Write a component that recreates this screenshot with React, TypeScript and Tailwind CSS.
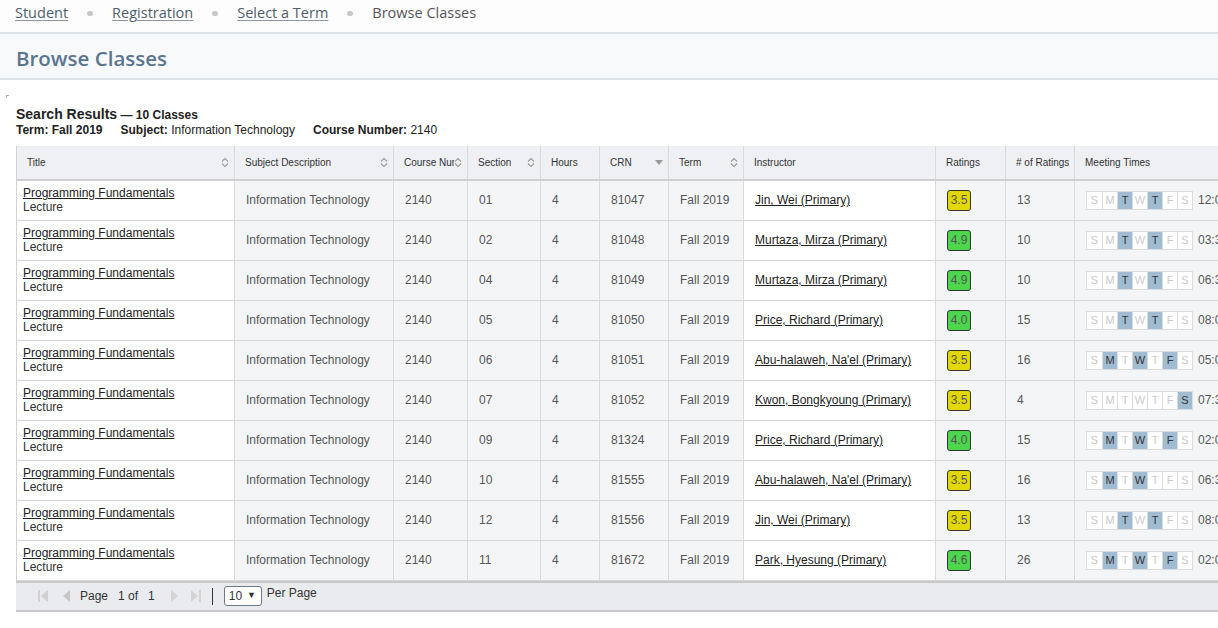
import React from "react";

type Row = {
  section: string;
  crn: string;
  instructor: string;
  rating: string;
  count: string;
  days: string;
  time: string;
};

const rows: Row[] = [
  { section: "01", crn: "81047", instructor: "Jin, Wei", rating: "3.5", count: "13", days: "TR", time: "12:00 PM - 01:15 PM" },
  { section: "02", crn: "81048", instructor: "Murtaza, Mirza", rating: "4.9", count: "10", days: "TR", time: "03:30 PM - 04:45 PM" },
  { section: "04", crn: "81049", instructor: "Murtaza, Mirza", rating: "4.9", count: "10", days: "TR", time: "06:30 PM - 07:45 PM" },
  { section: "05", crn: "81050", instructor: "Price, Richard", rating: "4.0", count: "15", days: "TR", time: "08:00 AM - 09:15 AM" },
  { section: "06", crn: "81051", instructor: "Abu-halaweh, Na'el", rating: "3.5", count: "16", days: "MWF", time: "05:00 PM - 05:50 PM" },
  { section: "07", crn: "81052", instructor: "Kwon, Bongkyoung", rating: "3.5", count: "4", days: "A", time: "07:30 AM - 10:15 AM" },
  { section: "09", crn: "81324", instructor: "Price, Richard", rating: "4.0", count: "15", days: "MWF", time: "02:00 PM - 02:50 PM" },
  { section: "10", crn: "81555", instructor: "Abu-halaweh, Na'el", rating: "3.5", count: "16", days: "MW", time: "06:30 PM - 07:45 PM" },
  { section: "12", crn: "81556", instructor: "Jin, Wei", rating: "3.5", count: "13", days: "TR", time: "08:00 AM - 09:15 AM" },
  { section: "11", crn: "81672", instructor: "Park, Hyesung", rating: "4.6", count: "26", days: "MWF", time: "02:00 PM - 02:50 PM" },
];

const dayKeys = [
  { label: "S", key: "U" },
  { label: "M", key: "M" },
  { label: "T", key: "T" },
  { label: "W", key: "W" },
  { label: "T", key: "R" },
  { label: "F", key: "F" },
  { label: "S", key: "A" },
];

const SortIcon = () => (
  <svg width="8" height="11" viewBox="0 0 8 11" className="shrink-0">
    <path d="M1 4.5 L4 1.5 L7 4.5" fill="none" stroke="#9a9a9a" strokeWidth="1.1" />
    <path d="M1 6.5 L4 9.5 L7 6.5" fill="none" stroke="#9a9a9a" strokeWidth="1.1" />
  </svg>
);

const SortDown = () => (
  <svg width="8" height="5" viewBox="0 0 8 5" className="shrink-0">
    <path d="M0 0 L8 0 L4 5 Z" fill="#9a9a9a" />
  </svg>
);

const columns: { label: string; sort?: "both" | "down"; w: string }[] = [
  { label: "Title", sort: "both", w: "w-[218px]" },
  { label: "Subject Description", sort: "both", w: "w-[159px]" },
  { label: "Course Number", sort: "both", w: "w-[74px]" },
  { label: "Section", sort: "both", w: "w-[73px]" },
  { label: "Hours", w: "w-[59px]" },
  { label: "CRN", sort: "down", w: "w-[69px]" },
  { label: "Term", sort: "both", w: "w-[75px]" },
  { label: "Instructor", w: "w-[192px]" },
  { label: "Ratings", w: "w-[70px]" },
  { label: "# of Ratings", w: "w-[69px]" },
  { label: "Meeting Times", w: "w-[260px]" },
];

const Days = ({ days }: { days: string }) => (
  <div className="flex border border-[#dcdcdc] bg-white">
    {dayKeys.map((d, i) => {
      const on = days.includes(d.key);
      return (
        <span
          key={i}
          className={`flex h-[17px] w-[15px] items-center justify-center text-[11px] ${i > 0 ? "border-l border-[#dcdcdc]" : ""} ${on ? "bg-[#9fbcd2] text-[#333]" : "text-[#c9c9c9]"}`}
        >
          {d.label}
        </span>
      );
    })}
  </div>
);

const App: React.FC = () => {
  const grayCell = "bg-[#f4f5f7] border-r border-[#dadada] px-[11px] align-middle";
  return (
    <div className="w-[1218px] h-[628px] overflow-hidden bg-white font-['Liberation_Sans',Arial,sans-serif]">
      {/* breadcrumb */}
      <div className="h-[32px] flex items-center pl-[15px] pb-[6px] font-['Open_Sans',sans-serif] text-[14.5px] text-[#555] bg-[#fdfdfd]">
        <a className="text-[#4f5d6b] underline decoration-[#8a96a3] underline-offset-2">Student</a>
        <span className="mx-[19px] inline-block h-[5px] w-[6px] rounded-full bg-[#c8c8c8]" />
        <a className="text-[#4f5d6b] underline decoration-[#8a96a3] underline-offset-2">Registration</a>
        <span className="mx-[19px] inline-block h-[5px] w-[6px] rounded-full bg-[#c8c8c8]" />
        <a className="text-[#4f5d6b] underline decoration-[#8a96a3] underline-offset-2">Select a Term</a>
        <span className="mx-[19px] inline-block h-[5px] w-[6px] rounded-full bg-[#c8c8c8]" />
        <span className="text-[#555]">Browse Classes</span>
      </div>
      <div className="h-[48px] border-y-2 border-[#dde2e6] bg-[#f8f9fb] flex items-center pl-[16px] pt-[4px]">
        <h1 className="font-['Open_Sans',sans-serif] font-semibold text-[20.5px] text-[#5a7590]">Browse Classes</h1>
      </div>

      <div className="relative pl-[16px] pt-[26px]">
        <span className="absolute left-[6px] top-[15px] h-[3px] w-[3px] border-l border-t border-[#aaa]" />
        <div className="text-[#222] leading-[15px]">
          <span className="font-bold text-[14px]">Search Results</span>
          <span className="text-[12px] font-semibold"> — 10 Classes</span>
        </div>
        <div className="text-[12px] text-[#222] leading-[14px] flex gap-[18px]">
          <span className="font-bold">Term: Fall 2019</span>
          <span>
            <b>Subject:</b> Information Technology
          </span>
          <span>
            <b>Course Number:</b> 2140
          </span>
        </div>

        <table className="mt-[9px] table-fixed border-collapse border-l border-[#d3d3d3] w-[1318px] text-[12px]">
          <thead>
            <tr className="h-[34px] bg-[#eef0f3] border-b-2 border-[#cfcfcf]">
              {columns.map((c) => (
                <th
                  key={c.label}
                  className={`${c.w} border-r border-[#dadada] pl-[10px] pr-[5px] text-left font-normal text-[10px] text-[#333] align-middle`}
                >
                  <div className="flex items-center justify-between overflow-hidden whitespace-nowrap">
                    <span className="overflow-hidden">{c.label}</span>
                    {c.sort === "both" && <SortIcon />}
                    {c.sort === "down" && <SortDown />}
                  </div>
                </th>
              ))}
            </tr>
          </thead>
          <tbody className="text-[#555]">
            {rows.map((r) => (
              <tr key={r.crn} className="h-[40px] border-b border-[#d6d6d6]">
                <td className="bg-white border-r border-[#dadada] px-[6px] align-middle leading-[14px]">
                  <a className="text-[#222] underline">Programming Fundamentals</a>
                  <div className="text-[#333]">Lecture</div>
                </td>
                <td className={grayCell}>Information Technology</td>
                <td className={grayCell}>2140</td>
                <td className={grayCell}>{r.section}</td>
                <td className={grayCell}>4</td>
                <td className={grayCell}>{r.crn}</td>
                <td className={grayCell}>Fall 2019</td>
                <td className="bg-white border-r border-[#dadada] px-[11px] align-middle whitespace-nowrap">
                  <a className="text-[#222] underline">{r.instructor} (Primary)</a>
                </td>
                <td className={grayCell}>
                  <span
                    className={`inline-flex h-[21px] w-[24px] items-center justify-center rounded-[3px] border border-[#333] text-[#555] ${r.rating === "3.5" ? "bg-[#e3d900]" : "bg-[#4cd64c]"}`}
                  >
                    {r.rating}
                  </span>
                </td>
                <td className={grayCell}>{r.count}</td>
                <td className={`${grayCell} whitespace-nowrap`}>
                  <div className="flex items-center gap-[5px]">
                    <Days days={r.days} />
                    <span className="text-[#555]">{r.time}</span>
                  </div>
                </td>
              </tr>
            ))}
          </tbody>
        </table>

        <div className="w-[1302px] h-[31px] border-t-2 border-b-2 border-[#c9c9c9] bg-[#e9ebee] flex items-center pl-[22px] text-[12px] text-[#333]">
          <svg width="10" height="12" viewBox="0 0 10 12">
            <rect x="0" y="0" width="2" height="12" fill="#d0d0d0" />
            <path d="M10 0 L3 6 L10 12 Z" fill="#d0d0d0" />
          </svg>
          <svg width="8" height="12" viewBox="0 0 8 12" className="ml-[14px]">
            <path d="M8 0 L1 6 L8 12 Z" fill="#c6c6c6" />
          </svg>
          <span className="ml-[10px]">Page</span>
          <span className="ml-[10px]">1 of</span>
          <span className="ml-[10px]">1</span>
          <svg width="8" height="12" viewBox="0 0 8 12" className="ml-[16px]">
            <path d="M0 0 L7 6 L0 12 Z" fill="#d4d4d4" />
          </svg>
          <svg width="10" height="12" viewBox="0 0 10 12" className="ml-[12px]">
            <path d="M0 0 L7 6 L0 12 Z" fill="#d4d4d4" />
            <rect x="8" y="0" width="2" height="12" fill="#d4d4d4" />
          </svg>
          <span className="ml-[11px] h-[17px] w-px bg-[#333]" />
          <span className="ml-[11px] flex h-[20px] w-[38px] items-center gap-[5px] rounded-[3px] border border-[#6b7b8a] bg-white pl-[4px] text-[12px]">
            10 <span className="text-[9px]">▼</span>
          </span>
          <span className="ml-[5px] -mt-[6px]">Per Page</span>
        </div>
      </div>
    </div>
  );
};

export default App;
